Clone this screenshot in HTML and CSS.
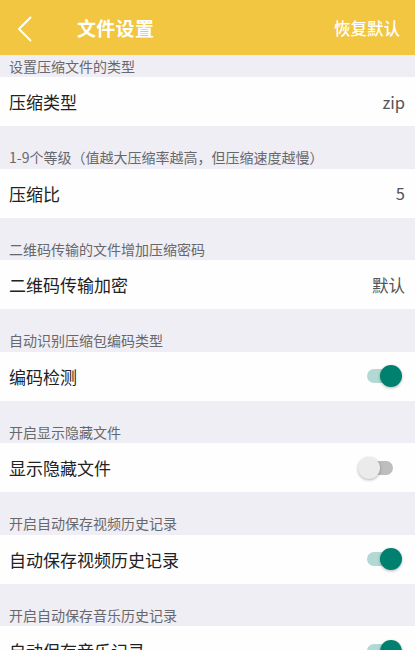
FILE: index.html
```html
<!DOCTYPE html>
<html lang="zh-CN">
<head>
<meta charset="utf-8">
<title>文件设置</title>
<link rel="stylesheet" href="styles.css">
</head>
<body>
<div class="app">
  <header class="topbar">
    <div class="back">
      <svg width="17" height="26" viewBox="0 0 17 26"><path d="M14.5 1.5 L3 13 L14.5 24.5" fill="none" stroke="#fff" stroke-width="2" stroke-linecap="round" stroke-linejoin="round"/></svg>
    </div>
    <div class="title">文件设置</div>
    <div class="reset">恢复默认</div>
  </header>

  <div class="label first">设置压缩文件的类型</div>
  <div class="row"><span class="name">压缩类型</span><span class="value">zip</span></div>

  <div class="label">1-9个等级（值越大压缩率越高，但压缩速度越慢）</div>
  <div class="row"><span class="name">压缩比</span><span class="value">5</span></div>

  <div class="label">二维码传输的文件增加压缩密码</div>
  <div class="row"><span class="name">二维码传输加密</span><span class="value">默认</span></div>

  <div class="label">自动识别压缩包编码类型</div>
  <div class="row"><span class="name">编码检测</span><span class="switch on"><span class="track"></span><span class="thumb"></span></span></div>

  <div class="label">开启显示隐藏文件</div>
  <div class="row"><span class="name">显示隐藏文件</span><span class="switch"><span class="track"></span><span class="thumb"></span></span></div>

  <div class="label">开启自动保存视频历史记录</div>
  <div class="row"><span class="name">自动保存视频历史记录</span><span class="switch on"><span class="track"></span><span class="thumb"></span></span></div>

  <div class="label">开启自动保存音乐历史记录</div>
  <div class="row"><span class="name">自动保存音乐记录</span><span class="switch on"><span class="track"></span><span class="thumb"></span></span></div>
</div>
</body>
</html>
```
FILE: styles.css
```css
html, body {
  margin: 0;
  padding: 0;
  background: #efeef4;
  font-family: "Noto Sans CJK SC", "Noto Sans", sans-serif;
}
.app {
  width: 415px;
  height: 650px;
  overflow: hidden;
  background: #efeef4;
}
.topbar {
  height: 55px;
  background: #f2c640;
  display: flex;
  align-items: center;
  color: #fff;
  padding: 0 15px 0 16px;
  box-sizing: border-box;
}
.back {
  width: 17px;
  height: 26px;
  display: flex;
  margin-top: 2px;
}
.title {
  margin-left: 44px;
  font-size: 19px;
  font-weight: 700;
  letter-spacing: 0.3px;
  flex: 1;
}
.reset {
  font-size: 16.5px;
  font-weight: 500;
}
.label {
  height: 42.5px;
  box-sizing: border-box;
  padding: 21px 0 0 9px;
  font-size: 14px;
  line-height: 21px;
  color: #68686c;
}
.label.first {
  height: 22px;
  padding-top: 1px;
}
.row {
  height: 49px;
  background: #fefeff;
  display: flex;
  align-items: center;
  justify-content: space-between;
  padding: 0 10px 0 9px;
  box-sizing: border-box;
}
.name {
  font-size: 17px;
  color: #222;
}
.value {
  font-size: 16.5px;
  color: #555;
}
.switch {
  position: relative;
  width: 44px;
  height: 24px;
  margin-right: 3px;
}
.track {
  position: absolute;
  left: 9px;
  right: 9px;
  top: 5px;
  height: 14px;
  border-radius: 7px;
  background: #bdbdbd;
}
.thumb {
  position: absolute;
  left: 0;
  top: 1px;
  width: 22px;
  height: 22px;
  border-radius: 50%;
  background: #ebebeb;
  box-shadow: 0 1px 3px rgba(0,0,0,0.3);
}
.switch.on .track {
  background: #b2d9d4;
}
.switch.on .thumb {
  left: auto;
  right: 0;
  background: #00806e;
}
```
